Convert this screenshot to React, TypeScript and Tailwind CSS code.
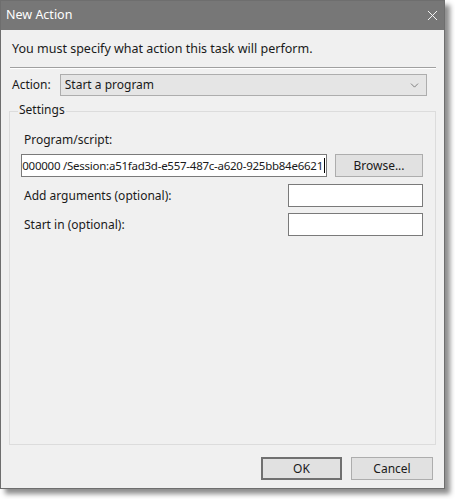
import { X, ChevronDown } from "lucide-react";

const font = { fontFamily: '"Segoe UI", "Noto Sans", sans-serif' };

function TextBox({ className = "", children }: { className?: string; children?: React.ReactNode }) {
  return (
    <div className={`h-[23px] bg-white border border-[#7a7a7a] flex items-center overflow-hidden ${className}`}>
      {children}
    </div>
  );
}

function Button({ caption, def = false, className = "" }: { caption: string; def?: boolean; className?: string }) {
  return (
    <div
      className={`h-[23px] flex items-center justify-center bg-[#e1e1e1] text-[12px] text-[#1a1a1a] ${
        def ? "border-2 border-[#707070]" : "border border-[#adadad]"
      } ${className}`}
    >
      {caption}
    </div>
  );
}

export default function App() {
  return (
    <div className="w-[455px] h-[499px] bg-white relative" style={font}>
      {/* window */}
      <div className="w-[445px] h-[489px] flex flex-col bg-[#f0f0f0] border border-[#6e6e6e] shadow-[5px_5px_5px_rgba(0,0,0,0.45)]">
        {/* title bar */}
        <div className="h-[29px] shrink-0 bg-[#777777] flex items-center justify-between pl-[5px] pr-[3px]">
          <span className="text-[12.5px] text-white">New Action</span>
          <X className="w-[17px] h-[17px] text-white" strokeWidth={1.3} />
        </div>

        <div className="flex flex-col px-[9px] flex-1">
          {/* intro */}
          <div className="pt-[11px] pl-[2px] text-[12.5px] text-[#1a1a1a] leading-[16px]">
            You must specify what action this task will perform.
          </div>
          <div className="mt-[10px] h-[2px] border-t border-[#a0a0a0] border-b border-b-white mr-[-1px]" />

          {/* action */}
          <div className="mt-[5px] flex items-center gap-[9px] pl-[2px] pr-[8px]">
            <span className="text-[12px] text-[#1a1a1a]">Action:</span>
            <div className="flex-1 h-[22px] bg-[#e5e5e5] border border-[#adadad] flex items-center justify-between pl-[4px] pr-[5px]">
              <span className="text-[12px] text-[#1a1a1a]">Start a program</span>
              <ChevronDown className="w-[13px] h-[13px] text-[#555]" strokeWidth={1.3} />
            </div>
          </div>

          {/* settings group */}
          <div className="relative mt-[15px] h-[334px] border border-[#dcdcdc] ml-[-1px] mr-[-1px]">
            <span className="absolute left-[8px] top-[-10px] px-[1px] bg-[#f0f0f0] text-[12px] text-[#1a1a1a] leading-[16px]">
              Settings
            </span>
            <div className="flex flex-col pt-[20px] pl-[11px] pr-[12px]">
              <span className="pl-[3px] text-[12px] text-[#1a1a1a] leading-[16px]">Program/script:</span>
              <div className="mt-[6px] flex items-center gap-[8px]">
                <TextBox className="w-[306px] justify-end pr-[1px]">
                  <span className="whitespace-nowrap text-[11.5px] tracking-[-0.25px] text-[#1a1a1a]">
                    000000 /Session:a51fad3d-e557-487c-a620-925bb84e6621
                  </span>
                  <span className="w-[1px] h-[15px] bg-black shrink-0 ml-[1px]" />
                </TextBox>
                <Button caption="Browse..." className="w-[88px]" />
              </div>
              <div className="mt-[7px] flex items-center justify-between">
                <span className="pl-[3px] text-[12px] text-[#1a1a1a]">Add arguments (optional):</span>
                <TextBox className="w-[135px]" />
              </div>
              <div className="mt-[6px] flex items-center justify-between">
                <span className="pl-[3px] text-[12px] text-[#1a1a1a]">Start in (optional):</span>
                <TextBox className="w-[135px]" />
              </div>
            </div>
          </div>

          {/* buttons */}
          <div className="mt-[12px] flex justify-end gap-[9px] pr-[2px]">
            <Button caption="OK" def className="w-[81px]" />
            <Button caption="Cancel" className="w-[82px]" />
          </div>
        </div>
      </div>
    </div>
  );
}
